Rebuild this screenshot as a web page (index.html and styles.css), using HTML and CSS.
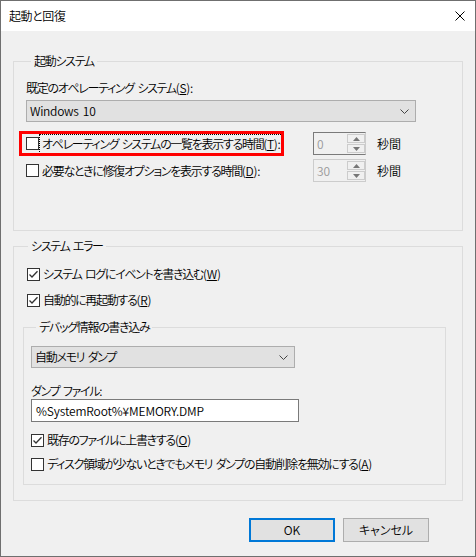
FILE: index.html
```html
<!DOCTYPE html>
<html lang="ja">
<head>
<meta charset="utf-8">
<title>起動と回復</title>
<link rel="stylesheet" href="styles.css">
</head>
<body>
<div class="window">
  <div class="titlebar">
    <span class="title">起動と回復</span>
    <svg class="close" width="10" height="10" viewBox="0 0 10 10"><path d="M0.5 0.5 L9.5 9.5 M9.5 0.5 L0.5 9.5" stroke="#000" stroke-width="1" fill="none"/></svg>
  </div>
  <div class="content">
    <div class="group g-start">
      <div class="gtitle">起動システム</div>
      <div class="label l-os">既定のオペレーティング システム<span class="mn">(<u>S</u>):</span></div>
      <div class="combo combo-os">
        <span class="latin-os">Windows 10</span>
        <svg class="chev" width="9" height="5" viewBox="0 0 9 5"><path d="M0.5 0.5 L4.5 4.5 L8.5 0.5" stroke="#444" fill="none"/></svg>
      </div>
      <div class="srow srow-1">
        <div class="check">
          <span class="box"></span>
          <span class="ctext focus">オペレーティング システムの一覧を表示する時間<span class="mn">(<u>T</u>):</span></span>
        </div>
        <div class="spin spin-active">
          <span class="spin-val">0</span>
          <div class="spin-btns">
            <span class="sbtn"><svg width="7" height="4" viewBox="0 0 7 4"><path d="M0 4 L3.5 0 L7 4 Z" fill="#777"/></svg></span>
            <span class="sbtn"><svg width="7" height="4" viewBox="0 0 7 4"><path d="M0 0 L3.5 4 L7 0 Z" fill="#777"/></svg></span>
          </div>
        </div>
        <span class="unit">秒間</span>
        <div class="highlight"></div>
      </div>
      <div class="srow srow-2">
        <div class="check">
          <span class="box"></span>
          <span class="ctext">必要なときに修復オプションを表示する時間<span class="mn">(<u>D</u>):</span></span>
        </div>
        <div class="spin">
          <span class="spin-val">30</span>
          <div class="spin-btns">
            <span class="sbtn"><svg width="7" height="4" viewBox="0 0 7 4"><path d="M0 4 L3.5 0 L7 4 Z" fill="#777"/></svg></span>
            <span class="sbtn"><svg width="7" height="4" viewBox="0 0 7 4"><path d="M0 0 L3.5 4 L7 0 Z" fill="#777"/></svg></span>
          </div>
        </div>
        <span class="unit">秒間</span>
      </div>
    </div>

    <div class="group g-error">
      <div class="gtitle">システム エラー</div>
      <div class="check crow crow-1">
        <span class="box"><svg width="11" height="11" viewBox="0 0 11 11"><path d="M1.5 5.5 L4 8 L9.5 2.2" stroke="#333" stroke-width="1.3" fill="none"/></svg></span>
        <span class="ctext">システム ログにイベントを書き込む<span class="mn">(<u>W</u>)</span></span>
      </div>
      <div class="check crow crow-2">
        <span class="box"><svg width="11" height="11" viewBox="0 0 11 11"><path d="M1.5 5.5 L4 8 L9.5 2.2" stroke="#333" stroke-width="1.3" fill="none"/></svg></span>
        <span class="ctext">自動的に再起動する<span class="mn">(<u>R</u>)</span></span>
      </div>

      <div class="group g-debug">
        <div class="gtitle">デバッグ情報の書き込み</div>
        <div class="combo combo-dump">
          <span>自動メモリ ダンプ</span>
          <svg class="chev" width="9" height="5" viewBox="0 0 9 5"><path d="M0.5 0.5 L4.5 4.5 L8.5 0.5" stroke="#444" fill="none"/></svg>
        </div>
        <div class="label l-file">ダンプ ファイル:</div>
        <div class="input">%SystemRoot%¥MEMORY.DMP</div>
        <div class="check crow crow-3">
          <span class="box"><svg width="11" height="11" viewBox="0 0 11 11"><path d="M1.5 5.5 L4 8 L9.5 2.2" stroke="#333" stroke-width="1.3" fill="none"/></svg></span>
          <span class="ctext">既存のファイルに上書きする<span class="mn">(<u>O</u>)</span></span>
        </div>
        <div class="check crow crow-4">
          <span class="box"></span>
          <span class="ctext">ディスク領域が少ないときでもメモリ ダンプの自動削除を無効にする<span class="mn">(<u>A</u>)</span></span>
        </div>
      </div>
    </div>

    <div class="buttons">
      <div class="btn btn-default">OK</div>
      <div class="btn">キャンセル</div>
    </div>
  </div>
</div>
</body>
</html>
```

FILE: styles.css
```css
* { box-sizing: border-box; }
html, body { margin: 0; padding: 0; background: #f0f0f0; }
body {
  font-family: "Noto Sans CJK JP", "Noto Sans", sans-serif;
  font-size: 12px;
  font-weight: 350;
  line-height: 16px;
  letter-spacing: -1.3px;
  word-spacing: 2px;
  color: #000;
  font-feature-settings: "palt";
}
u { text-decoration: underline; text-underline-offset: 1px; }
.mn { letter-spacing: -0.3px; }

.window {
  width: 476px;
  height: 557px;
  border: 1px solid #6f6f6f;
  background: #f0f0f0;
  display: flex;
  flex-direction: column;
}
.titlebar {
  height: 30px;
  background: #fff;
  display: flex;
  align-items: center;
  justify-content: space-between;
  padding: 0 10px 0 8px;
  flex: none;
}
.title { font-size: 12px; letter-spacing: -0.4px; }
.close { display: block; }

.content {
  padding: 30px 12px 0 12px;
  flex: 1;
}

.group {
  border: 1px solid #dcdcdc;
}
.gtitle {
  margin-top: -9px;
  margin-left: 5px;
  padding: 0 3px;
  background: #f0f0f0;
  width: fit-content;
  height: 16px;
}

.g-start { padding: 0 12px 48px 12px; }
.l-os { margin-top: 11px; }

.combo {
  height: 22px;
  border: 1px solid #adadad;
  background: #e1e1e1;
  display: flex;
  align-items: center;
  justify-content: space-between;
  padding: 0 6px 0 3px;
}
.combo-os { margin-top: 4px; width: 390px; }
.latin-os { letter-spacing: -0.3px; }
.chev { display: block; }

.srow {
  position: relative;
  display: flex;
  align-items: center;
  height: 23px;
}
.srow-1 { margin-top: 10px; }
.srow-2 { margin-top: 4px; }
.srow .check { width: 287px; flex: none; }

.check { display: flex; align-items: center; }
.box {
  width: 13px;
  height: 13px;
  border: 1px solid #333;
  background: #fff;
  flex: none;
  display: flex;
  align-items: center;
  justify-content: center;
}
.box svg { display: block; }
.ctext { margin-left: 2px; white-space: nowrap; padding: 0 1px; }
.focus { outline: 1px dotted #000; outline-offset: 1px; }

.spin {
  width: 53px;
  height: 23px;
  display: flex;
  border: 1px solid #cccccc;
  flex: none;
}
.spin-active { border-color: #7a7a7a; border-right-color: #cccccc; }
.spin-val {
  flex: 1;
  color: #9a9a9a;
  padding-left: 3px;
  line-height: 21px;
  letter-spacing: 0;
}
.spin-btns {
  width: 18px;
  display: flex;
  flex-direction: column;
  gap: 1px;
  padding: 1px 0 1px 0;
}
.sbtn {
  flex: 1;
  border: 1px solid #cccccc;
  background: #f0f0f0;
  display: flex;
  align-items: center;
  justify-content: center;
}
.sbtn svg { display: block; }
.unit { margin-left: 11px; letter-spacing: 0; }

.highlight {
  position: absolute;
  left: -7px;
  top: -1px;
  width: 265px;
  height: 25px;
  border: 3px solid #ff0000;
  pointer-events: none;
}

.g-error {
  margin-top: 15px;
  padding: 0 16px 15px 9px;
}
.crow { height: 16px; margin-left: 4px; }
.crow-1 { margin-top: 12px; }
.crow-2 { margin-top: 10px; }

.g-debug {
  margin-top: 19px;
  padding: 0 7px 12px 7px;
}
.combo-dump { margin-top: 11px; width: 264px; }
.l-file { margin-top: 15px; }
.input {
  width: 268px;
  height: 23px;
  border: 1px solid #7a7a7a;
  background: #fff;
  padding-left: 4px;
  line-height: 21px;
  letter-spacing: -0.15px;
  word-spacing: 0;
}
.crow-3 { margin-top: 10px; margin-left: 0; }
.crow-4 { margin-top: 8px; margin-left: 0; }

.buttons {
  margin-top: 17px;
  display: flex;
  justify-content: flex-end;
  gap: 8px;
  padding-right: 34px;
}
.btn {
  width: 86px;
  height: 24px;
  border: 1px solid #adadad;
  background: #e1e1e1;
  display: flex;
  align-items: center;
  justify-content: center;
  letter-spacing: 0;
}
.btn-default { border: 2px solid #0078d7; }
```
